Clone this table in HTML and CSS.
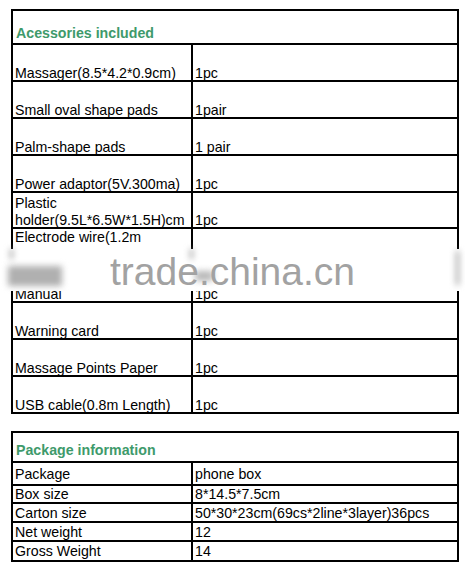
FILE: index.html
```html
<!DOCTYPE html>
<html>
<head>
<meta charset="utf-8">
<link rel="stylesheet" href="styles.css">
</head>
<body>
<div class="page">
  <div class="tbl acc">
    <div class="hdr"><span class="t">Acessories included</span></div>
    <div class="row"><div class="c c1"><span class="t">Massager(8.5*4.2*0.9cm)</span></div><div class="c c2"><span class="t">1pc</span></div></div>
    <div class="row"><div class="c c1"><span class="t">Small oval shape pads</span></div><div class="c c2"><span class="t">1pair</span></div></div>
    <div class="row"><div class="c c1"><span class="t">Palm-shape pads</span></div><div class="c c2"><span class="t">1 pair</span></div></div>
    <div class="row"><div class="c c1"><span class="t">Power adaptor(5V.300ma)</span></div><div class="c c2"><span class="t">1pc</span></div></div>
    <div class="row short"><div class="c c1"><span class="t">Plastic holder(9.5L*6.5W*1.5H)cm</span></div><div class="c c2"><span class="t">1pc</span></div></div>
    <div class="row top"><div class="c c1"><span class="t">Electrode wire(1.2m</span></div><div class="c c2"></div></div>
    <div class="row"><div class="c c1"><span class="t">Manual</span></div><div class="c c2"><span class="t">1pc</span></div></div>
    <div class="row"><div class="c c1"><span class="t">Warning card</span></div><div class="c c2"><span class="t">1pc</span></div></div>
    <div class="row"><div class="c c1"><span class="t">Massage Points Paper</span></div><div class="c c2"><span class="t">1pc</span></div></div>
    <div class="row"><div class="c c1"><span class="t">USB cable(0.8m Length)</span></div><div class="c c2"><span class="t">1pc</span></div></div>
  </div>

  <div class="tbl pkg">
    <div class="hdr"><span class="t">Package information</span></div>
    <div class="row p1"><div class="c c1">Package</div><div class="c c2">phone box</div></div>
    <div class="row p2"><div class="c c1">Box size</div><div class="c c2">8*14.5*7.5cm</div></div>
    <div class="row p3"><div class="c c1">Carton size</div><div class="c c2">50*30*23cm(69cs*2line*3layer)36pcs</div></div>
    <div class="row p4"><div class="c c1">Net weight</div><div class="c c2">12</div></div>
    <div class="row p5"><div class="c c1">Gross Weight</div><div class="c c2">14</div></div>
  </div>

  <div class="wm">
    <div class="blob b1"></div>
    <div class="blob b2"></div>
    <div class="blob b3"></div>
    <div class="blob b4"></div>
    <div class="blob b5"></div>
    <span class="wm-text">trade.china.cn</span>
  </div>
</div>
</body>
</html>
```

FILE: styles.css
```css
html, body {
  margin: 0;
  padding: 0;
  background: #fff;
}

.page {
  position: relative;
  width: 465px;
  height: 566px;
  padding: 9px 0 0 11px;
  box-sizing: border-box;
  font-family: "Liberation Sans", Arial, sans-serif;
  font-size: 14.2px;
  color: #000;
}

.tbl {
  width: 448px;
  box-sizing: border-box;
  border: 2px solid #000;
}

.hdr {
  display: flex;
  flex-direction: column;
  justify-content: flex-end;
  padding: 0 3px 1px;
  color: #3e9a6b;
  font-weight: bold;
  line-height: 17px;
}

.acc .hdr {
  height: 32px;
  box-sizing: border-box;
}

.row {
  display: grid;
  grid-template-columns: 178px 1fr;
  border-top: 2px solid #000;
}

.acc .row {
  height: 35px;
}

.acc .row.short {
  height: 34px;
}

.c {
  display: flex;
  flex-direction: column;
  justify-content: flex-end;
  padding: 0 2px;
  line-height: 17px;
  overflow: hidden;
}

.row.top .c {
  justify-content: flex-start;
}

.c2 {
  border-left: 2px solid #000;
}

.t {
  display: block;
  margin-bottom: -2px;
}

.hdr .t {
  margin-bottom: 0;
}

/* package table */
.pkg {
  margin-top: 17px;
}

.pkg .hdr {
  height: 28px;
  box-sizing: border-box;
  padding-bottom: 2px;
}

.pkg .c {
  justify-content: center;
  line-height: 16px;
}

.pkg .p1 { height: 21px; }
.pkg .p2 { height: 16px; }
.pkg .p3 { height: 17px; }
.pkg .p4 { height: 17px; }
.pkg .p5 { height: 18px; }

/* watermark overlay */
.wm {
  position: absolute;
  left: 0;
  top: 249px;
  width: 465px;
  height: 42px;
  background: #fff;
}

.wm-text {
  position: absolute;
  left: 110px;
  top: 3px;
  font-family: "Liberation Sans", Arial, sans-serif;
  font-size: 39px;
  line-height: 39px;
  color: #a2a2a2;
  white-space: nowrap;
}

.blob {
  position: absolute;
  background: #9a9a9a;
  filter: blur(3px);
}

.b1 { left: 8px; top: 17px; width: 54px; height: 20px; background: #b0b0b0; }
.b2 { left: 10px; top: 0; width: 3px; height: 10px; }
.b3 { left: 190px; top: 0; width: 3px; height: 10px; }
.b4 { left: 195px; top: 22px; width: 18px; height: 10px; background: #b8b8b8; }
.b5 { left: 456px; top: 2px; width: 3px; height: 34px; }
```
